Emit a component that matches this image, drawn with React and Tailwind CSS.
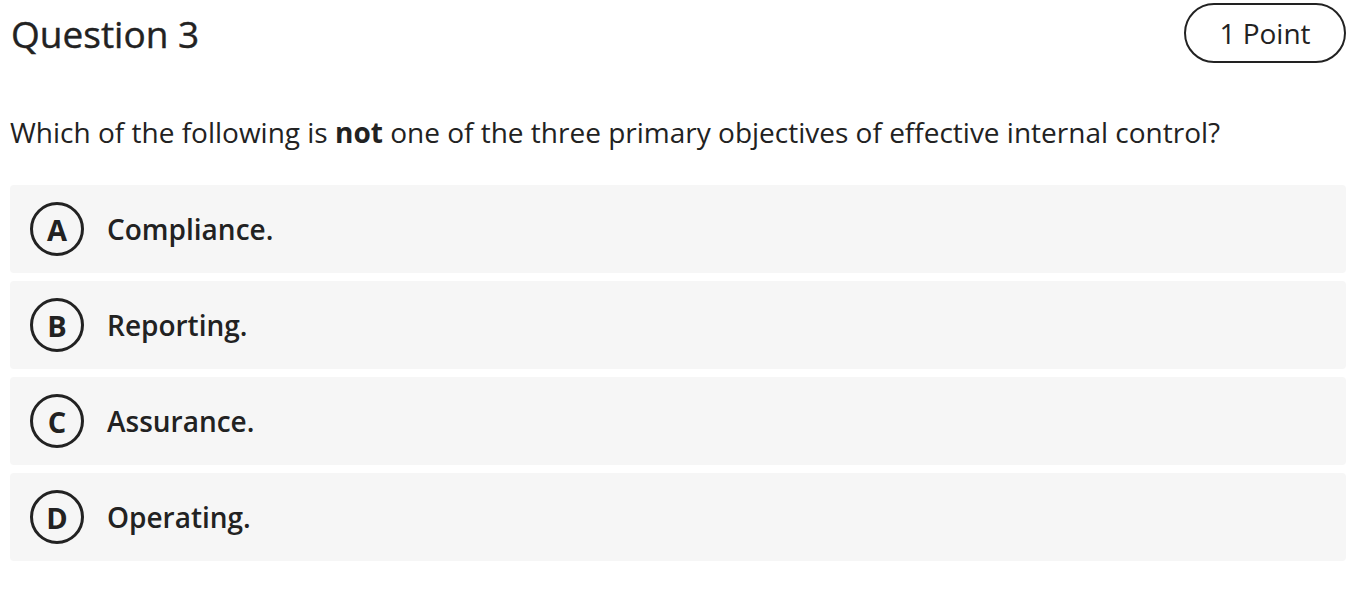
import React from "react";

const options = [
  { letter: "A", text: "Compliance." },
  { letter: "B", text: "Reporting." },
  { letter: "C", text: "Assurance." },
  { letter: "D", text: "Operating." },
];

export default function App() {
  return (
    <div
      className="w-[1352px] h-[616px] bg-white pl-[10px] pr-[6px] text-[#222222]"
      style={{ fontFamily: '"Open Sans", "Noto Sans", sans-serif' }}
    >
      <div className="flex items-center justify-between h-[64px] pt-[2px]">
        <h1 className="text-[37px] font-medium leading-none pl-[1px] [-webkit-text-stroke:0.4px_#222222]">Question 3</h1>
        <div className="h-[60px] w-[162px] rounded-full border-2 border-[#222222] flex items-center justify-center text-[28px] font-medium leading-none">
          1 Point
        </div>
      </div>
      <p className="mt-[50px] text-[28px] leading-[36px]">
        Which of the following is <b className="font-bold">not</b> one of the three primary objectives of effective internal control?
      </p>
      <div className="mt-[35px] flex flex-col gap-[8px]">
        {options.map((o) => (
          <div
            key={o.letter}
            className="h-[88px] rounded-[4px] bg-[#f6f6f6] flex items-center pl-[20px]"
          >
            <div className="w-[54px] h-[54px] rounded-full border-[3px] border-[#222222] flex items-center justify-center text-[29px] font-bold leading-none">
              {o.letter}
            </div>
            <span className="ml-[23px] text-[28px] font-semibold leading-none">{o.text}</span>
          </div>
        ))}
      </div>
    </div>
  );
}
